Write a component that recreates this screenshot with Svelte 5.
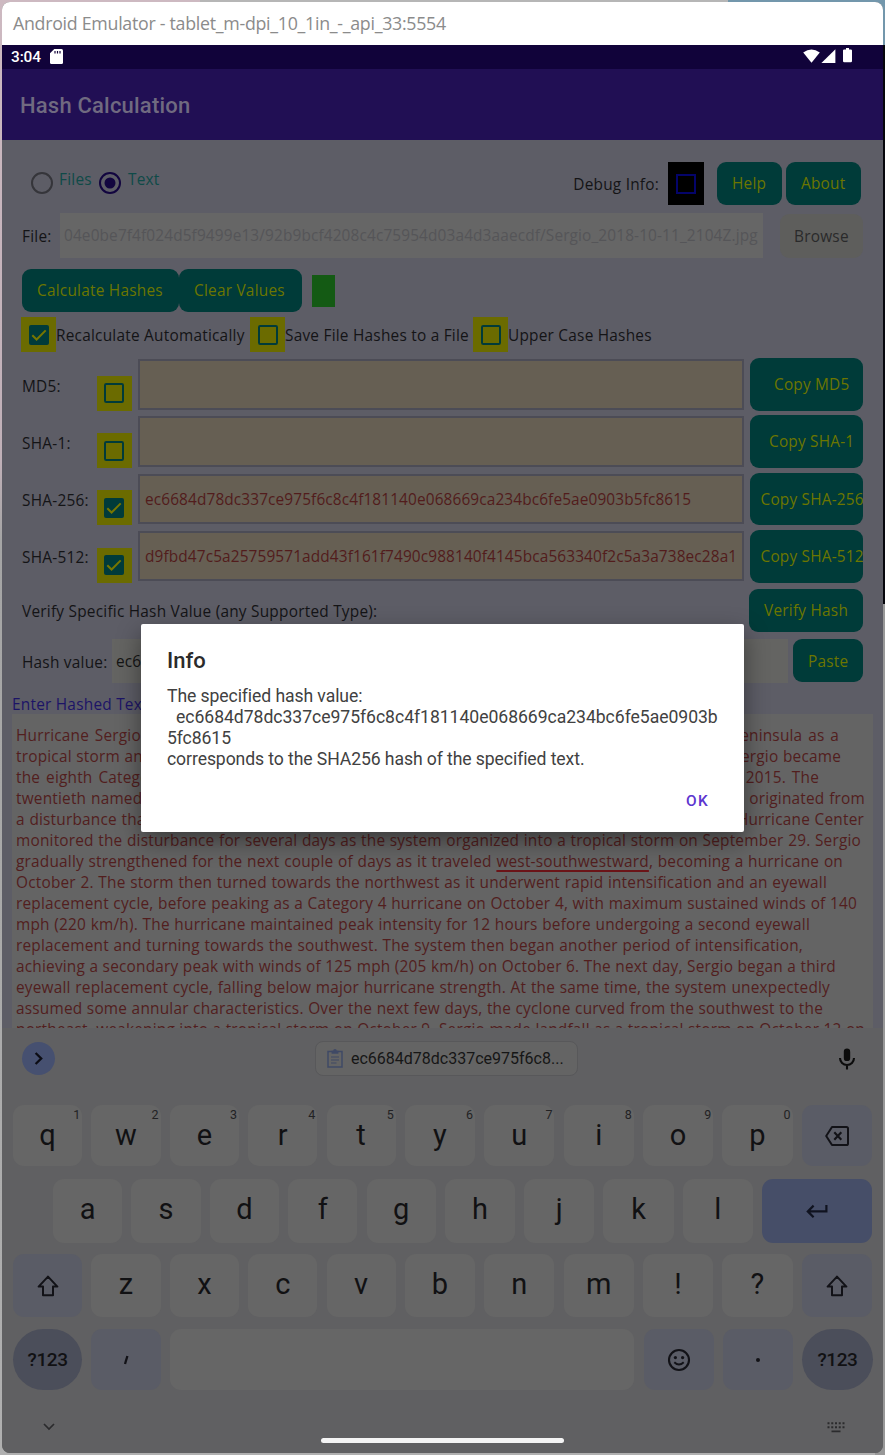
<script>
  const hash = 'ec6684d78dc337ce975f6c8c4f181140e068669ca234bc6fe5ae0903b5fc8615';

  const hashes = [
    { name: 'MD5:', on: false, value: '', copy: 'Copy MD5', indent: 24 },
    { name: 'SHA-1:', on: false, value: '', copy: 'Copy SHA-1', indent: 19 },
    { name: 'SHA-256:', on: true, value: hash, copy: 'Copy SHA-256', indent: 10.5 },
    {
      name: 'SHA-512:',
      on: true,
      value: 'd9fbd47c5a25759571add43f161f7490c988140f4145bca563340f2c5a3a738ec28a1',
      copy: 'Copy SHA-512',
      indent: 10.5
    }
  ];

  const options = [
    { label: 'Recalculate Automatically', on: true, width: 194 },
    { label: 'Save File Hashes to a File', on: false, width: 188 },
    { label: 'Upper Case Hashes', on: false, width: 160 }
  ];

  // Each line carries the width it fills inside the editor.
  const lines = [
    ['Hurricane Sergio was a powerful and long-lived tropical cyclone that struck the Baja California Peninsula as a', 823],
    ['tropical storm and caused significant flooding throughout southern Texas in early October 2018. Sergio became', 825],
    ['the eighth Category 4 hurricane in the East Pacific for 2018, breaking the record of seven set in 2015. The', 803],
    ['twentieth named storm, eleventh hurricane, and ninth major hurricane of the 2018 season, Sergio originated from', 849],
    ['a disturbance that was located over northwestern South America on September 24. The National Hurricane Center', 848],
    ['monitored the disturbance for several days as the system organized into a tropical storm on September 29. Sergio', 845],
    ['gradually strengthened for the next couple of days as it traveled |west-southwestward|, becoming a hurricane on', 827],
    ['October 2. The storm then turned towards the northwest as it underwent rapid intensification and an eyewall', 811],
    ['replacement cycle, before peaking as a Category 4 hurricane on October 4, with maximum sustained winds of 140', 841],
    ['mph (220 km/h). The hurricane maintained peak intensity for 12 hours before undergoing a second eyewall', 794],
    ['replacement and turning towards the southwest. The system then began another period of intensification,', 787],
    ['achieving a secondary peak with winds of 125 mph (205 km/h) on October 6. The next day, Sergio began a third', 820],
    ['eyewall replacement cycle, falling below major hurricane strength. At the same time, the system unexpectedly', 814],
    ['assumed some annular characteristics. Over the next few days, the cyclone curved from the southwest to the', 807],
    ['northeast, weakening into a tropical storm on October 9. Sergio made landfall as a tropical storm on October 12 on', 849]
  ];

  const row1 = 'qwertyuiop'.split('');
  const row2 = 'asdfghjkl'.split('');
  const row3 = 'zxcvbnm!?'.split('');
</script>

{#snippet check(on)}
  <svg class="box" viewBox="0 0 20 20">
    {#if on}
      <rect width="20" height="20" rx="2" fill="#003b3a" />
      <path d="M3.3 10.2l4.3 4.3L16.7 5.4" fill="none" stroke="#767600" stroke-width="2" />
    {:else}
      <rect x="1" y="1" width="18" height="18" rx="1.2" fill="none" stroke="#003b3a" stroke-width="2" />
    {/if}
  </svg>
{/snippet}

{#snippet shift()}
  <svg width="24" height="24" viewBox="0 0 24 24">
    <path d="M12 2.6L2.6 12.6H7v8.6h10v-8.6h4.4z" fill="none" stroke="#121217" stroke-width="2" stroke-linejoin="round" />
  </svg>
{/snippet}

<div class="desk">
  <div class="window">
    <header class="title">Android Emulator - tablet_m-dpi_10_1in_-_api_33:5554</header>

    <div class="status">
      <span class="clock">3:04</span>
      <svg width="13" height="15" viewBox="0 0 13 15">
        <path d="M4.3 0H11.5Q13 0 13 1.5V13.5Q13 15 11.5 15H1.5Q0 15 0 13.5V4.3z" fill="#fff" />
        <path d="M5 2v2.6M7.5 2v2.6M10 2v2.6" stroke="#14053a" stroke-width="1.2" />
      </svg>
      <span class="grow"></span>
      <svg width="50" height="16" viewBox="0 0 50 16">
        <path d="M0.2 4.6Q8.5-1.8 16.8 4.6L8.5 14.8z" fill="#fff" />
        <path d="M32.4 1.3V15H18.4z" fill="#fff" />
        <path d="M41.2 1.4h1.8V0h3v1.4h1.8Q49 1.4 49 2.6V13Q49 14.2 47.8 14.2H41.2Q40 14.2 40 13V2.6Q40 1.4 41.2 1.4z" fill="#fff" />
      </svg>
    </div>

    <div class="appbar">Hash Calculation</div>

    <main class="content">
      <div class="row mode">
        <svg class="radio" viewBox="0 0 22 22"><circle cx="11" cy="11" r="10" fill="none" stroke="#35353a" stroke-width="2" /></svg>
        <span class="opt files">Files</span>
        <svg class="radio" viewBox="0 0 22 22">
          <circle cx="11" cy="11" r="10" fill="none" stroke="#12053f" stroke-width="2" />
          <circle cx="11" cy="11" r="5.5" fill="#12053f" />
        </svg>
        <span class="opt text">Text</span>
        <span class="grow"></span>
        <span class="debug">Debug Info:</span>
        <span class="debugbox"><i></i></span>
        <button class="btn help">Help</button>
        <button class="btn about">About</button>
      </div>

      <div class="row file">
        <span class="lbl">File:</span>
        <div class="path">04e0be7f4f024d5f9499e13/92b9bcf4208c4c75954d03a4d3aaecdf/Sergio_2018-10-11_2104Z.jpg</div>
        <button class="browse">Browse</button>
      </div>

      <div class="row actions">
        <button class="btn calc">Calculate Hashes</button>
        <button class="btn clear">Clear Values</button>
        <span class="led"></span>
      </div>

      <div class="row options">
        {#each options as o}
          <span class="tick">{@render check(o.on)}</span>
          <span class="optlabel" style="width:{o.width}px">{o.label}</span>
        {/each}
      </div>

      <div class="hashes">
        {#each hashes as h}
          <div class="hash">
            <span class="name">{h.name}</span>
            <span class="tick low">{@render check(h.on)}</span>
            <div class="field">{h.value}</div>
            <button class="btn copy" style="padding-left:{h.indent}px">{h.copy}</button>
          </div>
        {/each}
      </div>

      <div class="row verify">
        <span class="grow vlabel">Verify Specific Hash Value (any Supported Type):</span>
        <button class="btn vbtn">Verify Hash</button>
      </div>

      <div class="row value">
        <span class="hv">Hash value:</span>
        <div class="vinput">ec6684d7</div>
        <button class="btn paste">Paste</button>
      </div>

      <div class="enter">Enter Hashed Text:</div>

      <div class="editor">
        {#each lines as [t, w]}
          <div class="line" style="width:{w}px">
            {#each t.split('|') as part, i}{#if i === 1}<u>{part}</u>{:else}{part}{/if}{/each}
          </div>
        {/each}
      </div>
    </main>

    <section class="keyboard">
      <div class="tools">
        <span class="more">
          <svg width="33" height="33" viewBox="0 0 33 33"><path d="M13.6 11l5.6 5.5-5.6 5.5" fill="none" stroke="#0c0c14" stroke-width="2.3" /></svg>
        </span>
        <span class="chip">
          <svg width="16" height="19" viewBox="0 0 16 19">
            <path d="M1 2.6h14v15.4H1z" fill="none" stroke="#3f4965" stroke-width="1.5" />
            <path d="M4.6 1.8h1.6a1.8 1.8 0 0 1 3.6 0h1.6v3H4.6z" fill="#3f4965" />
            <path d="M4 8h8M4 11h8M4 14h5.5" stroke="#3f4965" stroke-width="1.2" />
          </svg>
          <span>ec6684d78dc337ce975f6c8...</span>
        </span>
        <svg class="mic" width="18" height="22" viewBox="0 0 18 22">
          <rect x="5.8" y="0.5" width="6.4" height="12.6" rx="3.2" fill="#0c0c0c" />
          <path d="M2 10a7 7 0 0 0 14 0M9 17v4.5" fill="none" stroke="#0c0c0c" stroke-width="2.1" />
        </svg>
      </div>

      <div class="keys r1">
        {#each row1 as k, i}
          <div class="key">{k}<sup>{(i + 1) % 10}</sup></div>
        {/each}
        <div class="key alt">
          <svg width="24" height="20" viewBox="0 0 24 20">
            <path d="M7 1H21.4Q23 1 23 2.6V17.4Q23 19 21.4 19H7L1.2 10z" fill="none" stroke="#121217" stroke-width="2" stroke-linejoin="round" />
            <path d="M9.3 6.2l7 7.6M16.3 6.2l-7 7.6" stroke="#121217" stroke-width="2.1" />
          </svg>
        </div>
      </div>

      <div class="keys r2">
        {#each row2 as k}
          <div class="key">{k}</div>
        {/each}
        <div class="key enterkey">
          <svg width="22" height="15" viewBox="0 0 22 15">
            <path d="M20.4 1v6.4H2M7.6 1.6L1.8 7.4l5.8 5.8" fill="none" stroke="#101320" stroke-width="2.2" />
          </svg>
        </div>
      </div>

      <div class="keys r3">
        <div class="key alt">{@render shift()}</div>
        {#each row3 as k}
          <div class="key">{k}</div>
        {/each}
        <div class="key alt">{@render shift()}</div>
      </div>

      <div class="keys r4">
        <div class="key sym">?123</div>
        <div class="key alt">
          <svg width="6" height="10" viewBox="0 0 6 10"><path d="M4.4 1L2 9" stroke="#121217" stroke-width="2.3" /></svg>
        </div>
        <div class="key space"></div>
        <div class="key alt">
          <svg width="24" height="24" viewBox="0 0 24 24">
            <circle cx="12" cy="12" r="10" fill="none" stroke="#121217" stroke-width="2.1" />
            <circle cx="8.4" cy="9.6" r="1.6" fill="#121217" />
            <circle cx="15.6" cy="9.6" r="1.6" fill="#121217" />
            <path d="M7.3 14.2q4.7 4.6 9.4 0" fill="none" stroke="#121217" stroke-width="1.9" />
          </svg>
        </div>
        <div class="key alt"><span class="dot"></span></div>
        <div class="key sym">?123</div>
      </div>

      <div class="nav">
        <svg width="12" height="8" viewBox="0 0 12 8"><path d="M1 1l5 5 5-5" fill="none" stroke="#2b2b2d" stroke-width="1.7" /></svg>
        <span class="home"></span>
        <svg width="18" height="11" viewBox="0 0 18 11">
          <path d="M0.5 1.2h17M0.5 5.2h17" stroke="#2b2b2d" stroke-width="2" stroke-dasharray="2 1.75" />
          <path d="M4.5 9.4h9" stroke="#2b2b2d" stroke-width="1.8" />
        </svg>
      </div>
    </section>

    <div class="dialog">
      <h2>Info</h2>
      <p>The specified hash value:<br /><span class="dhash">{hash.slice(0, 57)}</span><br />{hash.slice(57)}<br />corresponds to the SHA256 hash of the specified text.</p>
      <button class="ok">OK</button>
    </div>
  </div>
</div>

<style>
  * { box-sizing: border-box; }
  button { border: 0; margin: 0; padding: 0; font: inherit; letter-spacing: inherit; color: inherit; text-align: left; white-space: nowrap; }
  svg { display: block; flex: none; }
  .desk {
    width: 885px; height: 1455px; padding: 2px; overflow: hidden;
    background:
      linear-gradient(90deg, #cdb9c1 0 200px, #b6b6b6 200px 728px, #7397ac 728px) 0 0 / 100% 2px no-repeat,
      linear-gradient(#7397ac 0 45px, #06060c 45px 604px, #989898 604px) 100% 0 / 10px 100% no-repeat,
      linear-gradient(#cdb9c1 0, #c0b0b8 460px, #a5a5a5 540px, #b0b0b0);
  }
  .window {
    position: relative; width: 881px; height: 1451px; overflow: hidden; border-radius: 8px;
    display: flex; flex-direction: column; background: #606062;
    font-family: "Open Sans", sans-serif; font-size: 15.4px; line-height: 21px; letter-spacing: 0.23px; color: #141416; white-space: nowrap;
  }
  .grow { flex: 1; }
  .title { height: 43px; flex: none; background: #fff; color: #8b8b8b; font-size: 17.8px; line-height: 43px; padding-left: 11px; letter-spacing: -0.28px; }
  .status { height: 24px; flex: none; background: #11033a; display: flex; align-items: center; padding: 0 30px 2px 9px; color: #fff; }
  .clock { font: 500 15.4px/24px Roboto, sans-serif; letter-spacing: -0.1px; width: 39px; padding-top: 1px; }
  .appbar { height: 71px; flex: none; background: #210f54; color: #706a80; font: 500 22px/73px Roboto, sans-serif; padding-left: 18px; letter-spacing: 0.2px; }
  .content { height: 888px; flex: none; overflow: hidden; background: #5d5d66; display: flex; flex-direction: column; padding: 22px 20px 0; }
  .row { display: flex; align-items: center; flex: none; }
  .btn { background: #003b39; color: #6c7600; border-radius: 9px; height: 43px; padding-left: 15px; flex: none; overflow: hidden; }

  .mode { height: 43px; padding: 0 2px 0 9px; }
  .radio { width: 22px; height: 22px; margin-top: -2px; }
  .opt { color: #0f4a48; padding-bottom: 8px; }
  .files { padding-left: 6px; margin-right: 1px; width: 45px; }
  .text { padding-left: 7px; }
  .debug { padding-top: 1px; }
  .debugbox { width: 36px; height: 43px; background: #000; margin: 0 13px 0 9px; display: grid; place-items: center; }
  .debugbox i { width: 20px; height: 20px; border: 2px solid #04046a; }
  .help { width: 65px; margin-right: 4px; }
  .about { width: 75px; }

  .file { height: 45px; margin-top: 8px; }
  .lbl { width: 38px; padding-top: 2px; }
  .path { width: 703px; height: 45px; background: #666; color: #555558; padding: 12px 0 0 4px; letter-spacing: 0.13px; overflow: hidden; }
  .browse { width: 83px; height: 44px; margin-left: 17px; border-radius: 9px; background: #5e5e5c; color: #2a2a2b; padding: 2px 0 0 14px; }

  .actions { margin-top: 11px; }
  .calc { width: 157px; }
  .clear { width: 122.5px; }
  .led { width: 23px; height: 32px; margin-left: 10.5px; background: #145a14; }

  .options { margin: 5px 0 0 -1px; height: 35px; }
  .tick { width: 35px; height: 35px; flex: none; background: #6b6b00; display: grid; place-items: center; }
  .box { width: 20px; height: 20px; }
  .optlabel { flex: none; padding-top: 2px; }

  .hashes { margin-top: 6px; display: flex; flex-direction: column; gap: 4.4px; }
  .hash { display: flex; height: 52.9px; }
  .name { width: 74.6px; padding-top: 17.5px; }
  .low { align-self: flex-end; }
  .field { width: 606px; height: 50.5px; margin: 1px 6px 0 6.4px; border: 2px solid #4c4c56; background: #665f53; color: #521c1c; padding: 13px 0 0 5px; letter-spacing: 0.12px; overflow: hidden; }
  .copy { width: 113px; height: 100%; letter-spacing: 0.2px; }

  .verify { margin-top: 6px; height: 43px; }
  .vlabel { padding-top: 2px; }
  .vbtn { width: 114px; padding-top: 1px; }
  .value { margin-top: 7px; height: 44px; }
  .hv { width: 90px; padding-top: 3px; }
  .vinput { width: 676px; height: 44px; background: #646462; padding: 12px 0 0 4px; color: #141414; margin-right: 5px; letter-spacing: 0.12px; overflow: hidden; }
  .paste { width: 70px; padding-top: 2px; }
  .enter { margin: 11px 0 0 -10px; color: #1c1466; height: 21px; flex: none; }
  .editor { margin: -1px -10px 0; height: 314px; flex: none; background: #646464; color: #521e1e; padding: 11.5px 4px 0; overflow: hidden; }
  .line { height: 21px; text-align-last: justify; letter-spacing: 0.2px; }
  u { text-decoration: underline 2px #6b1418; text-underline-offset: 3px; text-decoration-skip-ink: none; }

  .keyboard { flex: 1; background: #606062; padding: 0 11px; color: #111113; font-family: Roboto, sans-serif; letter-spacing: 0; }
  .tools { display: flex; align-items: center; justify-content: space-between; height: 77px; padding: 0 16px 16px 9px; }
  .more { width: 33px; height: 33px; border-radius: 50%; background: #465070; }
  .chip { width: 263px; height: 35px; border: 1px solid #58585a; border-radius: 8px; background: #646464; display: flex; align-items: center; gap: 8px; padding-left: 11px; font-size: 16px; color: #161616; }
  .keys { display: grid; grid-template-columns: repeat(5, 69.2px) repeat(6, 70.2px); gap: 9.2px; margin-bottom: 13px; height: 62px; flex: none; }
  .key { position: relative; border-radius: 11px; background: #666; display: flex; align-items: center; justify-content: center; font-size: 29px; line-height: 61px; }
  .r1, .r4 { height: 61px; }
  .r2 { padding-left: 40px; grid-template-columns: repeat(5, 69.2px) repeat(4, 70.1px) 110px; }
  .r2 .key:not(.enterkey) { padding-bottom: 3px; }
  .r3 .key:not(.alt) { padding-bottom: 2px; }
  .alt { background: #5a5c66; }
  .enterkey { background: #464e68; }
  sup { position: absolute; top: 3px; right: 2px; font-size: 12.5px; line-height: 14px; color: #222224; }
  .sym { border-radius: 31px; background: #4b4e5a; font-size: 19px; font-weight: 500; letter-spacing: -0.4px; }
  .r4 { grid-template-columns: 69.2px 69.2px 464.7px repeat(3, 70.2px); }
  .dot { width: 4px; height: 4px; border-radius: 50%; background: #121217; }
  .nav { display: flex; justify-content: space-between; align-items: center; padding: 0 27px 0 30px; height: 48px; }
  .home { width: 243px; height: 5px; border-radius: 3px; background: #f4f4f4; margin: 26px 0 0 3px; }

  .dialog { position: absolute; left: 139px; top: 621.5px; width: 603px; height: 208px; background: #fff; border-radius: 2px; box-shadow: 0 9px 24px rgba(0, 0, 0, 0.42); font-family: Roboto, sans-serif; letter-spacing: 0; display: flex; flex-direction: column; padding: 24px 26px 0; }
  h2 { margin: 0; font-weight: 500; font-size: 22px; line-height: 26px; color: #2b2b2b; }
  p { margin: 12px 0 0; font-size: 17.6px; line-height: 21px; letter-spacing: -0.09px; color: #414141; }
  .dhash { margin-left: 9px; letter-spacing: -0.04px; }
  .ok { align-self: flex-end; margin: 21px 9px 0 0; background: none; color: #5c35cf; font-weight: 500; font-size: 15.4px; line-height: 20px; letter-spacing: 1.3px; }
</style>
